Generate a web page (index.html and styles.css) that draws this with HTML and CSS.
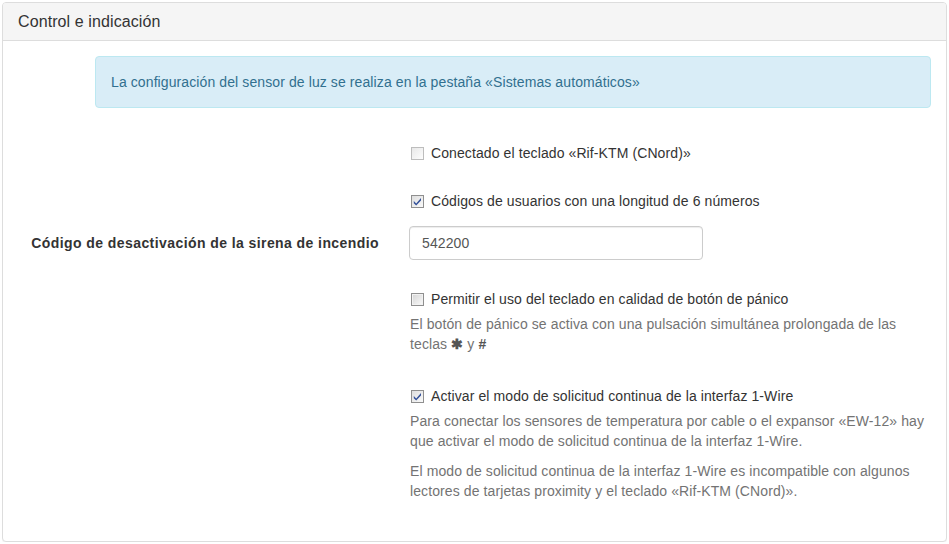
FILE: index.html
```html
<!DOCTYPE html>
<html lang="es">
<head>
<meta charset="utf-8">
<title>Control e indicación</title>
<link rel="stylesheet" href="styles.css">
</head>
<body>
<div class="panel">
  <div class="panel-heading">Control e indicación</div>
  <div class="panel-body">
    <div class="alert">La configuración del sensor de luz se realiza en la pestaña «Sistemas automáticos»</div>
    <div class="form">
      <div class="group">
        <div class="label-col"></div>
        <div class="field-col">
          <label class="checkbox"><span class="cb cb-light"></span>Conectado el teclado «Rif-KTM (CNord)»</label>
        </div>
      </div>
      <div class="group g2">
        <div class="label-col"></div>
        <div class="field-col">
          <label class="checkbox"><span class="cb cb-checked"><svg viewBox="0 0 11 11" width="11" height="11"><path d="M1.8 5 L4.2 7.4 L9 2 L9 4.4 L4.2 9.6 L1.8 7.2 Z" fill="#34519a"/></svg></span>Códigos de usuarios con una longitud de 6 números</label>
        </div>
      </div>
      <div class="group">
        <div class="label-col"><label class="control-label">Código de desactivación de la sirena de incendio</label></div>
        <div class="field-col">
          <input class="form-control" type="text" value="542200">
        </div>
      </div>
      <div class="group g4">
        <div class="label-col"></div>
        <div class="field-col">
          <label class="checkbox"><span class="cb cb-dark"></span>Permitir el uso del teclado en calidad de botón de pánico</label>
          <p class="help">El botón de pánico se activa con una pulsación simultánea prolongada de las teclas <span class="key">✱</span> y <span class="key">#</span></p>
        </div>
      </div>
      <div class="group">
        <div class="label-col"></div>
        <div class="field-col">
          <label class="checkbox"><span class="cb cb-checked"><svg viewBox="0 0 11 11" width="11" height="11"><path d="M1.8 5 L4.2 7.4 L9 2 L9 4.4 L4.2 9.6 L1.8 7.2 Z" fill="#34519a"/></svg></span>Activar el modo de solicitud continua de la interfaz 1-Wire</label>
          <p class="help">Para conectar los sensores de temperatura por cable o el expansor «EW-12» hay que activar el modo de solicitud continua de la interfaz 1-Wire.</p>
          <p class="help">El modo de solicitud continua de la interfaz 1-Wire es incompatible con algunos lectores de tarjetas proximity y el teclado «Rif-KTM (CNord)».</p>
        </div>
      </div>
    </div>
  </div>
</div>
</body>
</html>
```
FILE: styles.css
```css
* { box-sizing: border-box; }
html, body { margin: 0; padding: 0; }
body {
  margin: 2px;
  background: #fff;
  font-family: "Liberation Sans", Arial, Helvetica, sans-serif;
  font-size: 14px;
  line-height: 20px;
  letter-spacing: 0.1px;
  color: #333;
}
.panel {
  border: 1px solid #ddd;
  border-radius: 4px;
  background: #fff;
  height: 540px;
  box-shadow: 0 1px 1px rgba(0,0,0,0.05);
}
.panel-heading {
  background: #f5f5f5;
  border-bottom: 1px solid #ddd;
  border-radius: 3px 3px 0 0;
  padding: 10px 15px;
  font-size: 16px;
  line-height: 17px;
  color: #333;
}
.panel-body {
  padding: 15px;
}
.alert {
  margin-left: 77px;
  margin-bottom: 28px;
  padding: 15px;
  border: 1px solid #bce8f1;
  border-radius: 4px;
  background: #d9edf7;
  color: #31708f;
}
.form {
  display: flex;
  flex-direction: column;
}
.group {
  display: flex;
  margin-bottom: 15px;
}
.g2 { margin-top: 6px; }
.g4 { margin-top: 7px; }
.label-col {
  width: 392px;
  flex: none;
  padding-right: 31px;
  text-align: right;
}
.field-col {
  width: 520px;
}
.control-label {
  display: block;
  padding-top: 7px;
  font-weight: bold;
  letter-spacing: 0.42px;
}
.checkbox {
  display: flex;
  align-items: center;
  padding-top: 7px;
  min-height: 27px;
}
.cb {
  flex: none;
  width: 13px;
  height: 13px;
  margin-left: 1px;
  margin-right: 7px;
  border: 1px solid #c6c6c6;
  background: linear-gradient(135deg, #e6e6e6, #fbfbfb);
  display: flex;
  align-items: center;
  justify-content: center;
}
.cb-light {
  border-color: #bdbdbd;
  background: linear-gradient(135deg, #e8e8e8, #fdfdfd);
}
.cb-dark {
  border-color: #8f8f8f;
  background: linear-gradient(135deg, #d4d4d4, #fafafa);
  box-shadow: inset 0 0 0 1px #f2f2f2;
}
.cb-checked {
  border-color: #8f8f8f;
  background: linear-gradient(135deg, #dedede, #fafafa);
}
.form-control {
  display: block;
  width: 294px;
  height: 34px;
  padding: 6px 12px;
  font-family: "Liberation Sans", Arial, Helvetica, sans-serif;
  font-size: 14px;
  line-height: 20px;
  letter-spacing: 0.1px;
  color: #555;
  background: #fff;
  border: 1px solid #ccc;
  border-radius: 4px;
  box-shadow: inset 0 1px 1px rgba(0,0,0,0.075);
  margin: 0 0 0 -1px;
}
.help {
  margin: 5px 0 10px;
  color: #737373;
}
.key {
  display: inline-block;
  line-height: 20px;
  color: #555;
  font-weight: bold;
  font-size: 14px;
}
```
